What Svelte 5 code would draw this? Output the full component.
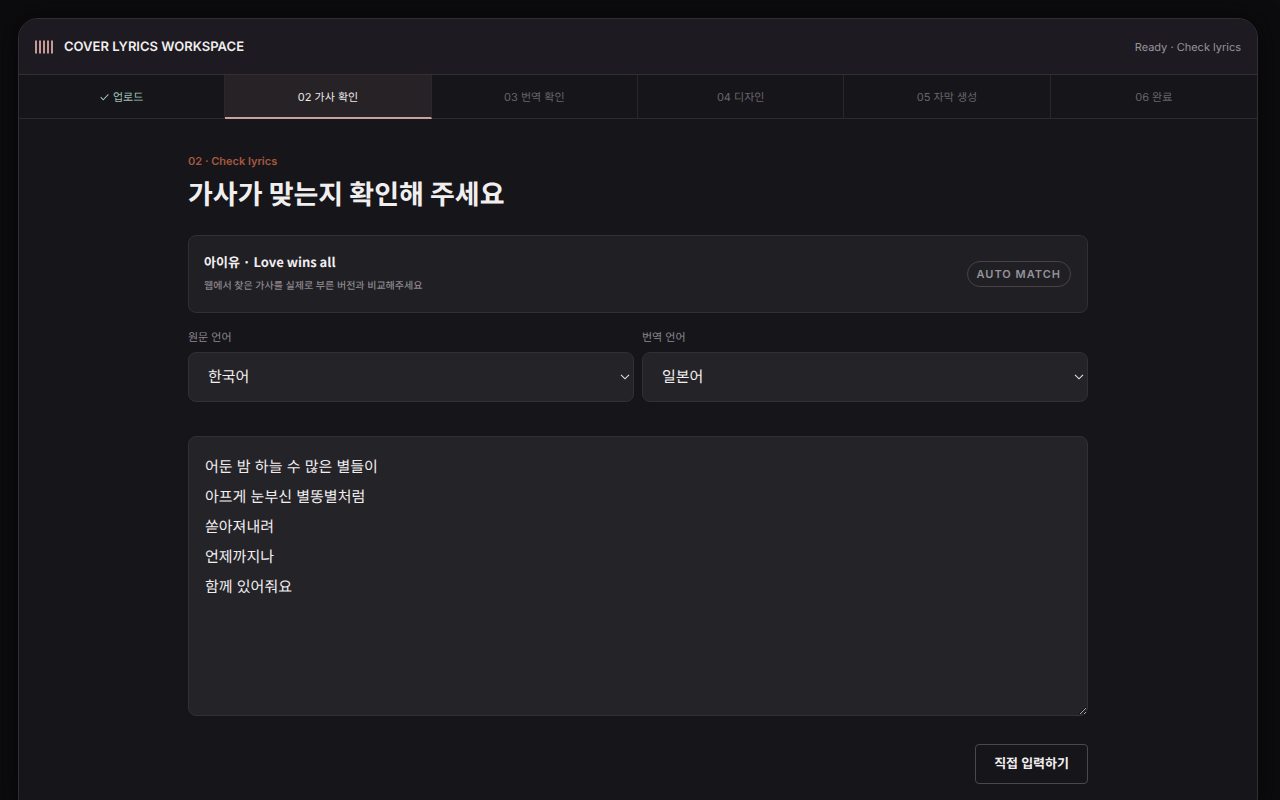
<script>
  const steps = [
    { label: '업로드', state: 'done' },
    { label: '02 가사 확인', state: 'current' },
    { label: '03 번역 확인', state: 'todo' },
    { label: '04 디자인', state: 'todo' },
    { label: '05 자막 생성', state: 'todo' },
    { label: '06 완료', state: 'todo' }
  ];

  let source = $state('한국어');
  let target = $state('일본어');
  let lyrics = $state(
    ['어둔 밤 하늘 수 많은 별들이', '아프게 눈부신 별똥별처럼', '쏟아져내려', '언제까지나', '함께 있어줘요'].join('\n')
  );
</script>

{#snippet chevron()}
  <svg class="chevron" width="10" height="6" viewBox="0 0 10 6" aria-hidden="true">
    <path d="M1 .8 5 4.8 9 .8" fill="none" stroke="#e4e1e3" stroke-width="1.1" />
  </svg>
{/snippet}

<div class="frame">
  <header>
    <div class="brand">
      <svg width="20" height="14" viewBox="0 0 20 14" aria-hidden="true">
        <path d="M2 .5v13M6 .5v13M10 .5v13M14 .5v13M18 .5v13" stroke="#c49a96" stroke-width="2" />
      </svg>
      <strong>COVER LYRICS WORKSPACE</strong>
    </div>
    <span class="status">Ready · Check lyrics</span>
  </header>

  <nav>
    {#each steps as step}
      <button type="button" class="step {step.state}" aria-current={step.state === 'current' ? 'step' : undefined}>
        {#if step.state === 'done'}
          <svg width="9" height="8" viewBox="0 0 9 8" aria-hidden="true">
            <path d="M.7 4.2 3.2 6.8 8.4 1.4" fill="none" stroke="currentColor" stroke-width="1.1" />
          </svg>
        {/if}
        {step.label}
      </button>
    {/each}
  </nav>

  <main>
    <p class="eyebrow">02 · Check lyrics</p>
    <h1>가사가 맞는지 확인해 주세요</h1>

    <section class="song">
      <div>
        <h2>아이유 · Love wins all</h2>
        <p>웹에서 찾은 가사를 실제로 부른 버전과 비교해주세요</p>
      </div>
      <span class="badge">AUTO MATCH</span>
    </section>

    <div class="languages">
      <label>
        원문 언어
        <span class="field">
          <select bind:value={source}>
            <option>한국어</option>
            <option>일본어</option>
          </select>
          {@render chevron()}
        </span>
      </label>
      <label>
        번역 언어
        <span class="field">
          <select bind:value={target}>
            <option>일본어</option>
            <option>한국어</option>
          </select>
          {@render chevron()}
        </span>
      </label>
    </div>

    <textarea aria-label="가사" spellcheck="false" bind:value={lyrics}></textarea>

    <div class="actions">
      <button type="button" class="manual">직접 입력하기</button>
    </div>
  </main>
</div>

<style>
  :global(body) {
    background: #0c0c0e;
    color: #f1eeef;
    color-scheme: dark;
    font-family: Inter, 'Noto Sans CJK KR', sans-serif;
  }

  * {
    box-sizing: border-box;
    text-rendering: geometricPrecision;
  }

  .frame {
    margin: 18px 22px 18px 18px;
    overflow: hidden;
    background: #16151a;
    border: 1px solid #322f34;
    border-radius: 20px;
    box-shadow: 0 0 24px #070709;
  }

  header {
    display: flex;
    align-items: center;
    justify-content: space-between;
    height: 56px;
    padding: 0 16px 0 15px;
    background: #1d1b21;
    border-bottom: 1px solid #322f34;
  }

  .brand {
    display: flex;
    align-items: center;
    gap: 10px;
    font-size: 13px;
    line-height: 18px;
  }

  .brand strong {
    font-weight: 600;
  }

  .status {
    color: #97939a;
    font-size: 11px;
    line-height: 18px;
  }

  nav {
    display: grid;
    grid-template-columns: repeat(6, 1fr);
    height: 44px;
    border-bottom: 1px solid #2c2a2f;
  }

  .step {
    display: flex;
    align-items: center;
    justify-content: center;
    gap: 4px;
    padding: 0;
    background: none;
    border: 0;
    border-right: 1px solid #29272c;
    color: #68656b;
    font: 400 11px/18px Inter, 'Noto Sans CJK KR', sans-serif;
  }

  .step:last-child {
    border-right: 0;
  }

  .step.done {
    color: #9fc0b3;
  }

  .step.current {
    margin-bottom: -1px;
    padding-top: 1px;
    background: #272226;
    border-bottom: 2px solid #c7a29f;
    color: #eeeaec;
  }

  main {
    max-width: 900px;
    margin: 0 auto;
    padding: 32px 0;
  }

  .eyebrow {
    margin: 0;
    color: #a8573f;
    font-size: 11px;
    font-weight: 600;
    line-height: 20px;
  }

  h1 {
    margin: 2px 0 22px;
    font: 700 27px/40px 'Noto Sans CJK KR', sans-serif;
  }

  .song {
    display: flex;
    align-items: center;
    justify-content: space-between;
    height: 78px;
    padding: 0 16px 0 15px;
    background: #201f24;
    border: 1px solid #323035;
    border-radius: 8px;
  }

  h2 {
    margin: 0 0 2px;
    font: 700 13px/22px 'Noto Sans CJK KR', sans-serif;
  }

  .song p {
    margin: 0;
    color: #8b878d;
    font-size: 10px;
    font-weight: 500;
    line-height: 22px;
  }

  .badge {
    padding: 3px 9px;
    border: 1px solid #4c4146;
    border-radius: 13px;
    color: #97939a;
    font-size: 11px;
    font-weight: 600;
    letter-spacing: 1px;
    line-height: 18px;
  }

  .languages {
    display: grid;
    grid-template-columns: 1fr 1fr;
    gap: 8px;
    margin: 14px 0 34px;
  }

  label {
    display: grid;
    gap: 5px;
    color: #8b878d;
    font-size: 11px;
    line-height: 20px;
  }

  .field {
    display: grid;
    align-items: center;
  }

  .field > * {
    grid-area: 1 / 1;
  }

  .chevron {
    justify-self: end;
    margin-right: 4px;
    pointer-events: none;
  }

  select {
    appearance: none;
    width: 100%;
    height: 50px;
    padding: 0 19px;
    background: #242328;
    border: 1px solid #323035;
    border-radius: 8px;
    color: #f1eeef;
    font: 400 15px/24px Inter, 'Noto Sans CJK KR', sans-serif;
  }

  textarea {
    display: block;
    width: 100%;
    height: 280px;
    padding: 15px 16px;
    background: #242328;
    border: 1px solid #323035;
    border-radius: 8px;
    color: #f1eeef;
    font: 400 15px/30px Inter, 'Noto Sans CJK KR', sans-serif;
    resize: vertical;
  }

  .actions {
    display: flex;
    justify-content: flex-end;
    margin-top: 28px;
  }

  .manual {
    height: 40px;
    padding: 0 18px;
    background: none;
    border: 1px solid #4a484d;
    border-radius: 4px;
    color: #f1eeef;
    font: 700 13px/20px Inter, 'Noto Sans CJK KR', sans-serif;
  }
</style>
